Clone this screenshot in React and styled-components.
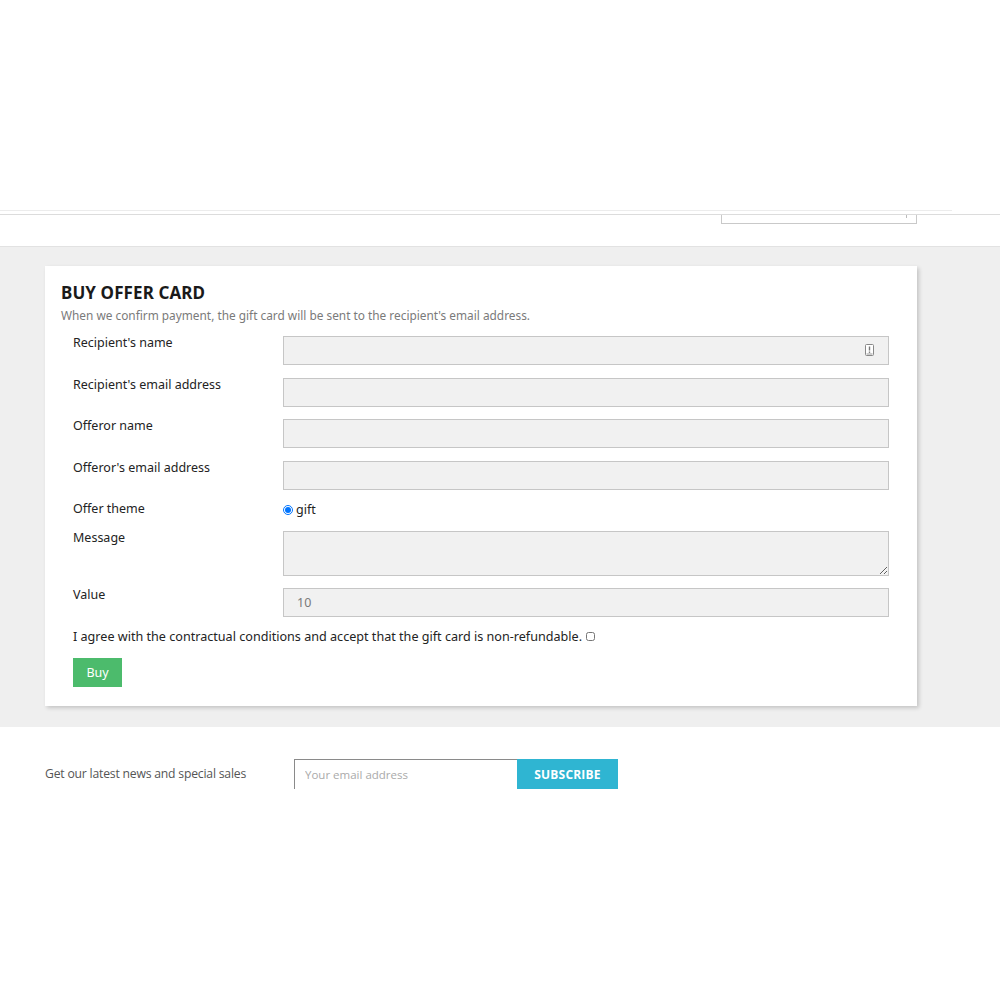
import React from "react";
import styled, { createGlobalStyle } from "styled-components";

const Global = createGlobalStyle`
  html, body { margin: 0; padding: 0; background: #fff; }
  body { font-family: "Noto Sans", "Open Sans", sans-serif; color: #232323; }
  * { box-sizing: border-box; }
`;

const Header = styled.header`
  height: 247px;
  background: #fff;
  border-bottom: 1px solid #e2e2e2;
  display: flex;
  flex-direction: column;
  justify-content: flex-start;
  padding-top: 210px;
`;

const FaintLine = styled.div`
  height: 1px;
  width: 952px;
  background: #ececec;
`;

const HeaderBar = styled.div`
  margin-top: 3px;
  border-top: 1px solid #dcdcdc;
  display: flex;
  justify-content: flex-end;
  padding-right: 83px;
`;

const SelectStub = styled.div`
  width: 196px;
  height: 9px;
  border: 1px solid #c9c9c9;
  border-top: none;
  position: relative;
  &::after {
    content: "";
    position: absolute;
    right: 9px;
    top: 0;
    width: 1px;
    height: 3px;
    background: #bbb;
  }
`;

const Main = styled.main`
  background: #efefef;
  padding: 19px 0 21px 45px;
`;

const Card = styled.section`
  width: 872px;
  background: #fff;
  box-shadow: 2px 2px 4px rgba(0, 0, 0, 0.18);
  padding: 16px 28px 19px 16px;
`;

const Title = styled.h1`
  margin: 0;
  font-size: 17px;
  line-height: 22px;
  font-weight: 700;
  color: #1a1a1a;
  letter-spacing: 0.1px;
`;

const Subtitle = styled.p`
  margin: 3px 0 0;
  font-size: 11.85px;
  line-height: 16px;
  color: #7a7a7a;
`;

const Form = styled.form`
  margin-top: 13px;
  padding-left: 12px;
  display: flex;
  flex-direction: column;
  gap: 12.5px;
`;

const Row = styled.div`
  display: grid;
  grid-template-columns: 210px 1fr;
  align-items: start;
`;

const Label = styled.label`
  font-size: 12.5px;
  line-height: 14px;
  color: #232323;
`;

const Field = styled.div`
  position: relative;
  height: ${(p) => p.$h || 29}px;
`;

const Input = styled.input`
  width: 100%;
  height: 100%;
  background: #f1f1f1;
  border: 1px solid #c6c6c6;
  border-radius: 0;
  padding: 0 13px;
  font-family: "Noto Sans", sans-serif;
  font-size: 12.5px;
  color: #7a7a7a;
  outline: none;
`;

const TextArea = styled.textarea`
  width: 100%;
  height: 100%;
  background: #f1f1f1;
  border: 1px solid #c6c6c6;
  border-radius: 0;
  resize: vertical;
  outline: none;
  display: block;
`;

const FieldIcon = styled.svg`
  position: absolute;
  right: 15px;
  top: 8px;
`;

const Radios = styled.div`
  display: flex;
  align-items: center;
  gap: 3px;
  font-size: 12.5px;
  line-height: 14px;
  height: 16px;
`;

const Radio = styled.input`
  width: 10px;
  height: 10px;
  margin: 0;
`;

const Agree = styled.label`
  display: flex;
  align-items: center;
  gap: 4px;
  font-size: 12.6px;
  line-height: 14px;
  color: #232323;
`;

const Check = styled.input`
  width: 9px;
  height: 9px;
  margin: 0;
`;

const BuyButton = styled.button`
  margin-top: 2px;
  align-self: flex-start;
  width: 49px;
  height: 29px;
  border: none;
  background: #4cbb6c;
  color: #fff;
  font-family: "Noto Sans", sans-serif;
  font-size: 12.5px;
  cursor: pointer;
`;

const Footer = styled.footer`
  display: flex;
  align-items: flex-start;
  padding: 32px 0 0 45px;
  height: 273px;
`;

const NewsText = styled.p`
  margin: 0;
  width: 249px;
  height: 30px;
  line-height: 30px;
  font-family: "Open Sans", sans-serif;
  font-size: 12.2px;
  letter-spacing: -0.2px;
  color: #555;
`;

const NewsForm = styled.div`
  display: flex;
`;

const EmailInput = styled.input`
  width: 223px;
  height: 30px;
  border: none;
  border-top: 1px solid #8a8a8a;
  border-left: 1px solid #8a8a8a;
  padding: 0 10px;
  font-family: "Open Sans", sans-serif;
  font-size: 11.5px;
  outline: none;
  &::placeholder { color: #aaa; }
`;

const Subscribe = styled.button`
  width: 101px;
  height: 30px;
  border: none;
  background: #2fb5d2;
  color: #fff;
  font-family: "Open Sans", sans-serif;
  font-weight: 700;
  font-size: 12px;
  letter-spacing: 0.2px;
  text-transform: uppercase;
`;

const KeyIcon = () => (
  <FieldIcon width="9" height="12" viewBox="0 0 9 12">
    <rect x="0.5" y="0.5" width="8" height="11" rx="1" fill="#fff" stroke="#888" />
    <rect x="3.8" y="2.5" width="1.4" height="4" fill="#777" />
    <rect x="3.8" y="7.5" width="1.4" height="1.4" fill="#777" />
    <rect x="1.5" y="9.5" width="6" height="1" fill="#999" />
  </FieldIcon>
);

const fields = [
  { label: "Recipient's name", icon: true },
  { label: "Recipient's email address" },
  { label: "Offeror name" },
  { label: "Offeror's email address" },
];

export default function App() {
  return (
    <>
      <Global />
      <Header>
        <FaintLine />
        <HeaderBar>
          <SelectStub />
        </HeaderBar>
      </Header>
      <Main>
        <Card>
          <Title>BUY OFFER CARD</Title>
          <Subtitle>
            When we confirm payment, the gift card will be sent to the recipient's email address.
          </Subtitle>
          <Form onSubmit={(e) => e.preventDefault()}>
            {fields.map((f) => (
              <Row key={f.label}>
                <Label>{f.label}</Label>
                <Field>
                  <Input type="text" />
                  {f.icon && <KeyIcon />}
                </Field>
              </Row>
            ))}
            <Row>
              <Label>Offer theme</Label>
              <Radios>
                <Radio type="radio" name="theme" defaultChecked />
                <span>gift</span>
              </Radios>
            </Row>
            <Row>
              <Label>Message</Label>
              <Field $h={45}>
                <TextArea />
              </Field>
            </Row>
            <Row>
              <Label>Value</Label>
              <Field>
                <Input type="text" defaultValue="10" readOnly />
              </Field>
            </Row>
            <Agree>
              I agree with the contractual conditions and accept that the gift card is non-refundable.
              <Check type="checkbox" />
            </Agree>
            <BuyButton type="submit">Buy</BuyButton>
          </Form>
        </Card>
      </Main>
      <Footer>
        <NewsText>Get our latest news and special sales</NewsText>
        <NewsForm>
          <EmailInput placeholder="Your email address" />
          <Subscribe>Subscribe</Subscribe>
        </NewsForm>
      </Footer>
    </>
  );
}
